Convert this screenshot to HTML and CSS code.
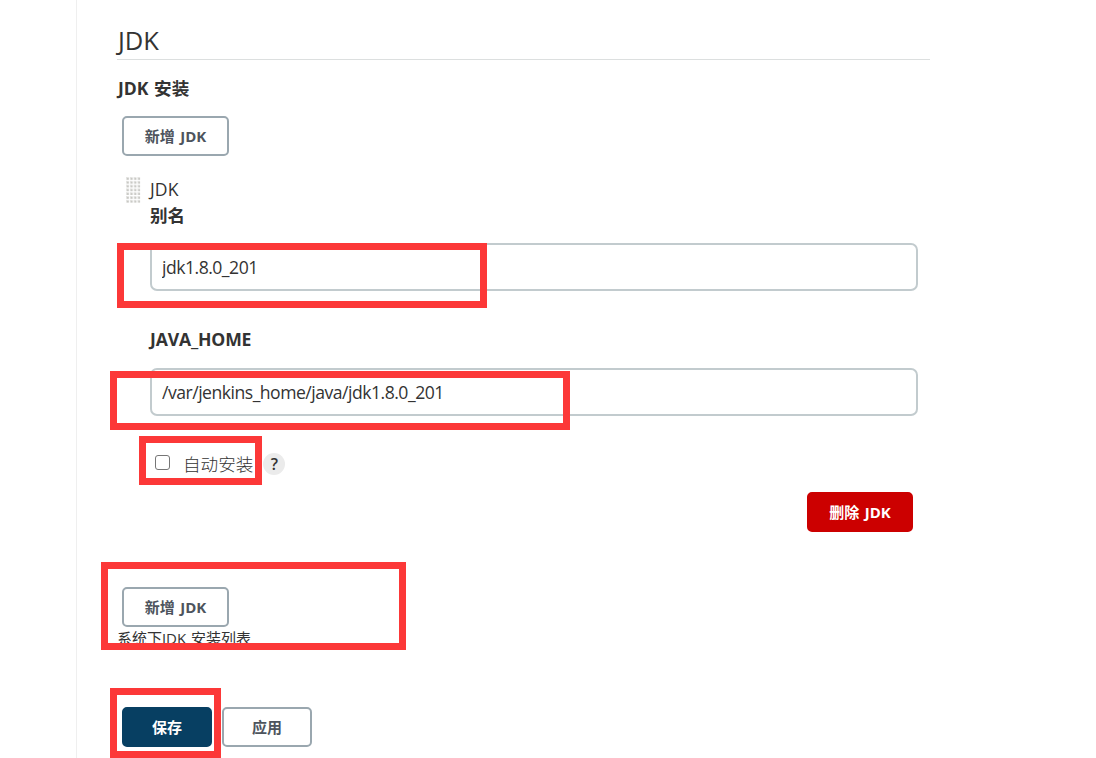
FILE: index.html
```html
<!DOCTYPE html>
<html lang="zh-CN">
<head>
<meta charset="utf-8">
<title>JDK</title>
<link rel="stylesheet" href="styles.css">
</head>
<body>
<main class="panel">
  <h1 class="section-title">JDK</h1>
  <h2 class="label install-label">JDK 安装</h2>
  <button class="btn btn-add">新增 JDK</button>

  <section class="entry">
    <div class="entry-head">
      <svg class="grip" width="15" height="27" viewBox="0 0 15 27">
        <defs>
          <pattern id="dots" width="3.8" height="3.8" patternUnits="userSpaceOnUse">
            <rect width="2.8" height="2.8" fill="#e4e4e2"/>
            <rect x="1" y="1" width="1.7" height="1.7" fill="#c4c4c0"/>
          </pattern>
        </defs>
        <rect width="14.4" height="26" fill="url(#dots)"/>
      </svg>
      <span class="entry-name">JDK</span>
    </div>
    <div class="fields">
      <label class="label name-label" for="name">别名</label>
      <input class="field" id="name" type="text" value="jdk1.8.0_201">
      <label class="label home-label" for="home">JAVA_HOME</label>
      <input class="field" id="home" type="text" value="/var/jenkins_home/java/jdk1.8.0_201">
      <div class="auto">
        <input class="check" id="auto" type="checkbox">
        <label class="auto-label" for="auto">自动安装</label>
        <span class="help">?</span>
      </div>
      <button class="btn btn-delete">删除 JDK</button>
    </div>
  </section>

  <button class="btn btn-add">新增 JDK</button>
  <p class="description">系统下JDK 安装列表</p>
  <div class="actions">
    <button class="btn btn-save">保存</button>
    <button class="btn">应用</button>
  </div>
</main>
<div class="mark mark-name"></div>
<div class="mark mark-home"></div>
<div class="mark mark-auto"></div>
<div class="mark mark-add"></div>
<div class="mark mark-save"></div>
</body>
</html>
```
FILE: styles.css
```css
* { box-sizing: border-box; }
body {
  margin: 0;
  height: 758px;
  position: relative;
  overflow: hidden;
  background: #fff;
  color: #333;
  font-family: "Open Sans", "Noto Sans CJK SC", sans-serif;
  font-size: 17px;
}
.panel {
  margin-left: 76px;
  width: 855px;
  height: 758px;
  padding: 22px 0 0 40px;
  border-left: 1px solid #efefef;
  display: flex;
  flex-direction: column;
  align-items: flex-start;
}
.section-title {
  margin: 0;
  width: 813px;
  height: 38px;
  padding-left: 1px;
  line-height: 37px;
  border-bottom: 1px solid #dcdfdf;
  font-size: 25.5px;
  font-weight: 400;
}
.label {
  display: block;
  margin: 0;
  font-size: 17.6px;
  font-weight: 700;
  line-height: 26px;
  white-space: nowrap;
}
.install-label { margin: 15px 0; padding-left: 1px; word-spacing: 1px; }
.btn {
  margin: 0 5px;
  height: 40px;
  width: 90px;
  flex: none;
  padding: 0;
  border: 2px solid #9aa7af;
  border-radius: 5px;
  background: #fff;
  color: #4d545d;
  font: 700 15px/36px "Open Sans", "Noto Sans CJK SC", sans-serif;
  word-spacing: 1.5px;
  white-space: nowrap;
}
.btn-add { width: 107px; }
.entry { width: 801px; height: 431px; padding-top: 20px; }
.entry-head {
  display: flex;
  align-items: flex-start;
  height: 27px;
  padding: 1px 0 0 9px;
}
.grip { margin-right: 9px; }
.entry-name { font-size: 17.6px; line-height: 24px; letter-spacing: 0.1px; }
.fields { display: flex; flex-direction: column; margin-left: 33px; }
.name-label { height: 40px; line-height: 25px; }
.field {
  width: 768px;
  height: 48px;
  padding: 0 10px;
  border: 2px solid #c2cbce;
  border-radius: 7px;
  background: #fff;
  color: #333;
  font: 400 17.6px "Open Sans", sans-serif;
  letter-spacing: -0.5px;
}
.home-label { height: 41px; margin-top: 36px; line-height: 25px; letter-spacing: -0.15px; }
.auto { display: flex; align-items: center; margin-top: 35px; height: 26px; }
.check {
  appearance: none;
  width: 15px;
  height: 15px;
  margin: 0 13px 3px 5px;
  border: 1px solid #767676;
  border-radius: 3px;
  background: #fff;
}
.auto-label { font-size: 17.6px; font-weight: 300; line-height: 26px; }
.help {
  width: 22px;
  height: 22px;
  margin-left: 10px;
  border-radius: 50%;
  background: #ebebeb;
  font-size: 16px;
  font-weight: 600;
  line-height: 22px;
  text-align: center;
}
.btn-delete {
  align-self: flex-end;
  width: 106px;
  margin-top: 15px;
  border-color: #c00;
  background: #c00;
  color: #fff;
}
.description {
  margin: 0;
  height: 80px;
  font-size: 15px;
  line-height: 22px;
  word-spacing: 1px;
}
.actions { display: flex; }
.btn-save { border-color: #073f62; background: #073f62; color: #fff; }
.mark { position: absolute; border: 7px solid #fc3838; }
.mark-name { left: 117px; top: 243px; width: 370px; height: 65px; }
.mark-home { left: 110px; top: 371px; width: 460px; height: 59px; }
.mark-auto { left: 139px; top: 436px; width: 123px; height: 49px; }
.mark-add { left: 101px; top: 562px; width: 305px; height: 88px; }
.mark-save { left: 110px; top: 688px; width: 111px; height: 70px; }
```
